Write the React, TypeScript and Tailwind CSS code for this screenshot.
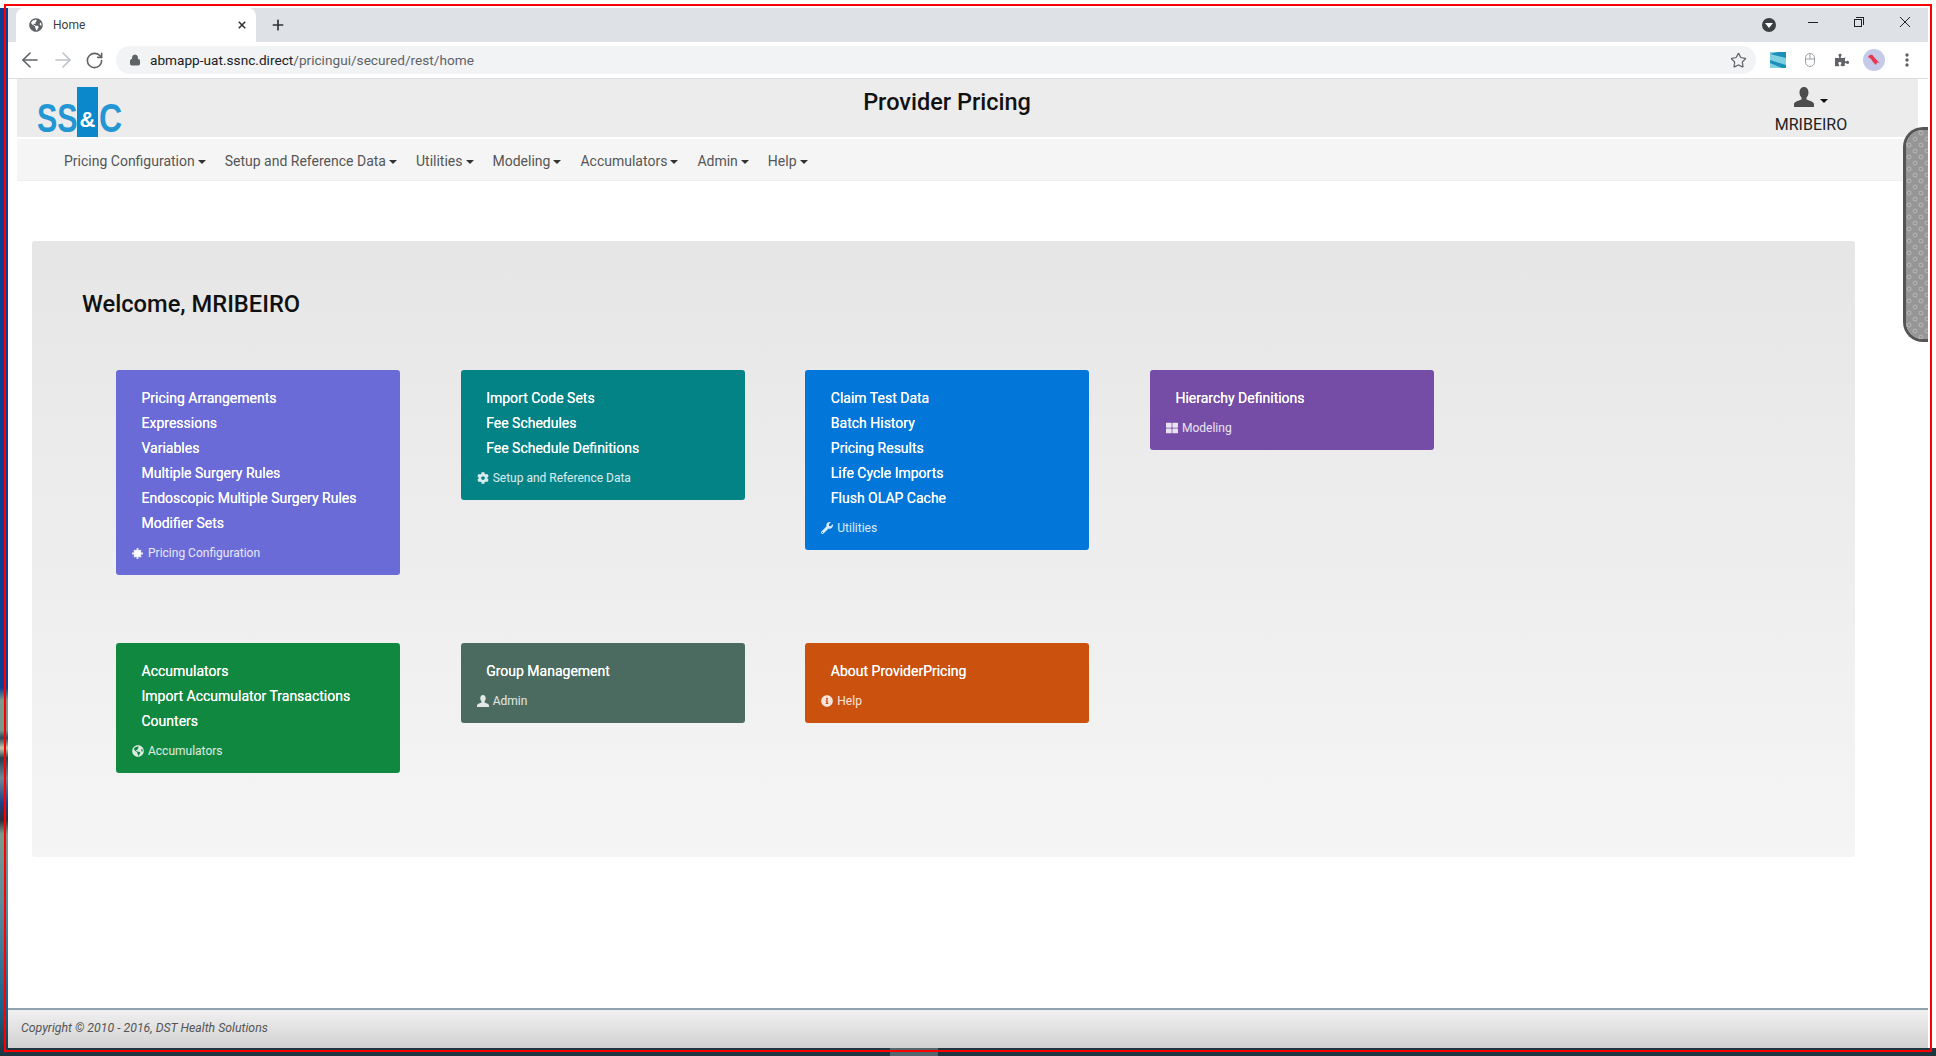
import { ArrowLeft, ArrowRight, RotateCw, Lock, Star, Plus } from 'lucide-react'
import { FaGlobeAmericas, FaCog, FaWrench, FaThLarge, FaInfoCircle, FaPuzzlePiece } from 'react-icons/fa'

const menus = ['Pricing Configuration', 'Setup and Reference Data', 'Utilities', 'Modeling', 'Accumulators', 'Admin', 'Help']

const Caret = () => <span className="ml-[3px] inline-block h-0 w-0 border-x-4 border-t-4 border-x-transparent border-t-[#333] align-middle" />

function BurstIcon() {
    return (
        <svg viewBox="0 0 12 12" className="h-[11px] w-[11px] fill-current">
            <circle cx="6" cy="6" r="4" />
            <path d="M5 0h2v12H5zM0 5h12v2H0zM1.5 3 3 1.5 10.500 9 9 10.500zM9 1.500 10.500 3 3 10.500 1.500 9z" />
        </svg>
    )
}

function UserIcon({ className }: { className: string }) {
    return (
        <svg viewBox="0 0 20 20" className={className}>
            <path fill="currentColor" d="M10 0c3 0 4.500 2.500 4.500 5.500 0 2-.8 4-2 5v2c2 1 7 1.800 7.500 4.500V20H0v-3c.5-2.700 5.500-3.500 7.500-4.500v-2c-1.200-1-2-3-2-5C5.500 2.500 7 0 10 0z" />
        </svg>
    )
}

function Card({ color, items, label, icon }: { color: string, items: string[], label: string, icon: React.ReactNode }) {
    return (
        <div className={`w-[284px] rounded-[3px] pb-[13px] pt-[16px] text-white ${color}`}>
            <ul className="pl-[25.5px] text-[14px] leading-[25px] [text-shadow:0_0_0.4px_white]">
                {items.map((item) => <li key={item}>{item}</li>)}
            </ul>
            <div className="mt-[8px] flex h-[18px] items-center pl-[16px] text-[12px] text-white/85">
                <span className="flex w-[16px] shrink-0 items-center">{icon}</span>
                {label}
            </div>
        </div>
    )
}

export default function App() {
    return (
        <div className="relative flex h-[1056px] w-[1936px] flex-col overflow-hidden bg-white font-['Roboto',sans-serif]">
            {/* browser chrome */}
            <div className="ml-[8px] mt-[8px] flex h-[34px] w-[1920px] items-end bg-[#dee1e6] pl-[8px] pr-[18px]">
                <div className="flex h-[34px] w-[240px] items-center rounded-t-[8px] bg-white pl-[13px] pr-[10px] text-[12px] text-[#3c4043]">
                    <FaGlobeAmericas className="mr-[10px] h-[14px] w-[14px] text-[#5f6368]" />
                    Home
                    <svg viewBox="0 0 10 10" className="ml-auto h-[8px] w-[8px] text-[#333]">
                        <path d="M1 1l8 8M9 1l-8 8" stroke="currentColor" strokeWidth="2" />
                    </svg>
                </div>
                <Plus className="mb-[9px] ml-[14px] h-[16px] w-[16px] text-[#333]" strokeWidth={2.500} />
                <div className="mb-[10px] ml-auto flex h-[14px] w-[14px] items-center justify-center rounded-full bg-[#3c4043]">
                    <span className="h-0 w-0 border-x-[4px] border-t-[5px] border-x-transparent border-t-white" />
                </div>
                <span className="mb-[19px] ml-[32px] h-px w-[10px] bg-[#222]" />
                <div className="relative mb-[15px] ml-[36px] h-[10px] w-[10px]">
                    <span className="absolute bottom-0 left-0 h-[8px] w-[8px] border border-[#222] bg-[#dee1e6]" />
                    <span className="absolute right-0 top-0 h-[8px] w-[8px] border-r border-t border-[#222]" />
                </div>
                <svg viewBox="0 0 10 10" className="mb-[15px] ml-[36px] h-[10px] w-[10px] text-[#222]">
                    <path d="M0 0l10 10M10 0L0 10" stroke="currentColor" strokeWidth="1" />
                </svg>
            </div>
            <div className="ml-[8px] flex h-[37px] w-[1920px] items-center border-b border-[#dadce0] bg-white pl-[10px]">
                <ArrowLeft className="h-[24px] w-[24px] text-[#5f6368]" strokeWidth={1.600} />
                <ArrowRight className="ml-[8.5px] h-[24px] w-[24px] text-[#bdc1c6]" strokeWidth={1.600} />
                <RotateCw className="ml-[10px] h-[19px] w-[19px] text-[#5f6368]" strokeWidth={2} />
                <div className="ml-[12.5px] flex h-[28px] w-[1640px] items-center rounded-full bg-[#f1f3f4] pl-[13px] pr-[9px] text-[13.65px]">
                    <Lock className="mr-[9px] h-[12px] w-[12px] fill-[#5f6368] text-[#5f6368]" strokeWidth={2} />
                    <span className="text-[#202124]">abmapp-uat.ssnc.direct</span>
                    <span className="text-[#5f6368]">/pricingui/secured/rest/home</span>
                    <Star className="ml-auto h-[17px] w-[17px] text-[#5f6368]" strokeWidth={1.700} />
                </div>
                <svg viewBox="0 0 16 16" className="ml-[14px] h-[16px] w-[16px]">
                    <rect width="16" height="16" fill="#7fd0e0" />
                    <path d="M0 2 8 0h8v6zM0 8l16 5v3h-4L0 11z" fill="#1c8fb8" />
                </svg>
                <svg viewBox="0 0 10 14" className="ml-[19px] h-[14px] w-[10px] text-[#9aa0a6]">
                    <rect x="0.5" y="0.5" width="9" height="13" rx="4.500" fill="none" stroke="currentColor" />
                    <path d="M5 0.500V6M0.500 6h9" fill="none" stroke="currentColor" />
                </svg>
                <FaPuzzlePiece className="ml-[20px] h-[14px] w-[14px] text-[#5f6368]" />
                <div className="ml-[14px] flex h-[22px] w-[22px] items-center justify-center rounded-full bg-[#c5cae9]">
                    <svg viewBox="0 0 12 12" className="h-[12px] w-[12px]">
                        <path d="M1 1.500 4 0.500 6 3 11.500 9 9 8.500 8 11 5 8 3 5 0 3z" fill="#e8384f" />
                    </svg>
                </div>
                <svg viewBox="0 0 4 14" className="ml-[20px] h-[14px] w-[4px] fill-[#5f6368]">
                    <circle cx="2" cy="2" r="1.700" />
                    <circle cx="2" cy="7" r="1.700" />
                    <circle cx="2" cy="12" r="1.700" />
                </svg>
            </div>

            {/* app header */}
            <div className="ml-[17px] flex h-[58px] w-[1901px] items-center bg-[#ececec]">
                <div className="ml-[20px] flex h-[50px] w-[100px] items-end self-end font-['Liberation_Sans',sans-serif] text-[40px] font-bold leading-[29px] text-[#2496d4]">
                    <span className="w-[40px] shrink-0 pb-[4px]">
                        <span className="inline-block origin-left scale-x-[0.76] whitespace-nowrap">SS</span>
                    </span>
                    <span className="flex h-[50px] w-[21px] shrink-0 items-end justify-center bg-[#0b88cb] pb-[7px] text-[22px] leading-[20px] text-white">&amp;</span>
                    <span className="pb-[4px] pl-[1px]">
                        <span className="inline-block origin-left scale-x-[0.8]">C</span>
                    </span>
                </div>
                <div className="mb-[10px] ml-[726px] w-[168px] whitespace-nowrap text-center text-[23.5px] font-medium text-[#111]">Provider Pricing</div>
                <div className="ml-auto mr-[71px] flex w-[72px] flex-col items-center self-start pt-[8px] text-[16px] leading-[18px] text-[#222]">
                    <div className="flex items-start">
                        <UserIcon className="h-[20px] w-[20px] text-[#4d4d4d]" />
                        <span className="ml-[6px] mt-[12px] h-0 w-0 border-x-4 border-t-4 border-x-transparent border-t-[#111]" />
                    </div>
                    <span className="mt-[9px]">MRIBEIRO</span>
                </div>
            </div>

            {/* nav */}
            <div className="ml-[17px] mt-[2px] flex h-[42px] w-[1901px] items-center gap-[19px] border-b border-[#eeeeee] bg-[#f5f5f5] pl-[47px] pt-[4px] text-[14px] text-[#555]">
                {menus.map((menu) => <span key={menu}>{menu}<Caret /></span>)}
            </div>

            {/* content */}
            <div className="ml-[32px] mt-[60px] h-[616px] w-[1823px] rounded-[3px] bg-gradient-to-b from-[#e6e6e6] to-[#f5f5f5] pl-[84px] pt-[48px]">
                <h1 className="-ml-[34px] text-[23.7px] font-medium leading-[30px] text-[#111]">Welcome, MRIBEIRO</h1>
                <div className="mt-[51px] flex items-start gap-[60.67px]">
                    <Card color="bg-[#6a6bd6]" label="Pricing Configuration" icon={<BurstIcon />} items={['Pricing Arrangements', 'Expressions', 'Variables', 'Multiple Surgery Rules', 'Endoscopic Multiple Surgery Rules', 'Modifier Sets']} />
                    <Card color="bg-[#048387]" label="Setup and Reference Data" icon={<FaCog className="h-[12px] w-[12px]" />} items={['Import Code Sets', 'Fee Schedules', 'Fee Schedule Definitions']} />
                    <Card color="bg-[#0277d9]" label="Utilities" icon={<FaWrench className="h-[12px] w-[12px]" />} items={['Claim Test Data', 'Batch History', 'Pricing Results', 'Life Cycle Imports', 'Flush OLAP Cache']} />
                    <Card color="bg-[#754da6]" label="Modeling" icon={<FaThLarge className="h-[12px] w-[12px]" />} items={['Hierarchy Definitions']} />
                </div>
                <div className="mt-[68px] flex items-start gap-[60.67px]">
                    <Card color="bg-[#118840]" label="Accumulators" icon={<FaGlobeAmericas className="h-[12px] w-[12px]" />} items={['Accumulators', 'Import Accumulator Transactions', 'Counters']} />
                    <Card color="bg-[#4b6b60]" label="Admin" icon={<UserIcon className="h-[12px] w-[12px]" />} items={['Group Management']} />
                    <Card color="bg-[#cb520e]" label="Help" icon={<FaInfoCircle className="h-[12px] w-[12px]" />} items={['About ProviderPricing']} />
                </div>
            </div>

            {/* footer */}
            <div className="ml-[8px] mt-[151px] flex h-[40px] w-[1920px] items-center border-t-2 border-[#8fa3ae] bg-gradient-to-b from-[#f0f0f0] to-[#d2d2d2] pb-[2px] pl-[13px] text-[12.3px] italic text-[#555]">
                Copyright © 2010 - 2016, DST Health Solutions
            </div>
            <div className="flex h-[8px] overflow-hidden bg-[#1f3540] pl-[890px] text-[13px] leading-[16px] text-white">
                <span className="h-[8px] w-[48px] bg-[#56666c]" />
                <span className="ml-[937px] pt-[5px]">3:42 PM</span>
            </div>

            {/* desktop edges and the capture frame */}
            <div className="absolute bottom-0 left-0 top-[8px] w-[8px] bg-[linear-gradient(to_bottom,#0d3f96_0,#0d3f96_680px,#7a9a8c_692px,#7a9a8c_722px,#2a4a5c_730px,#c9c7a8_740px,#23404f_750px,#6d8794_770px,#1f3f8a_795px,#2b2f3a_812px,#7a9a8c_826px,#5a8a9c_900px,#17638c_1000px,#1f3540_1048px)]" />
            <div className="absolute left-[4px] top-[4px] h-[1048px] w-[1928px] border-2 border-[#ff0000]" />

            {/* scrollbar widget overlapping the window */}
            <div className="absolute left-[1903px] top-[127px] h-[215px] w-[25px] overflow-hidden rounded-l-[20px] border-y-[3px] border-l-[3px] border-[#555]">
                <svg width="25" height="215">
                    <defs>
                        <pattern id="dots" width="12" height="12" patternUnits="userSpaceOnUse">
                            <rect width="12" height="12" fill="#969696" />
                            <circle cx="3" cy="3" r="2" fill="none" stroke="#c0c0c0" strokeWidth="0.8" />
                            <circle cx="9" cy="9" r="2" fill="none" stroke="#c0c0c0" strokeWidth="0.8" />
                        </pattern>
                    </defs>
                    <rect width="25" height="215" fill="url(#dots)" />
                </svg>
            </div>
        </div>
    )
}
